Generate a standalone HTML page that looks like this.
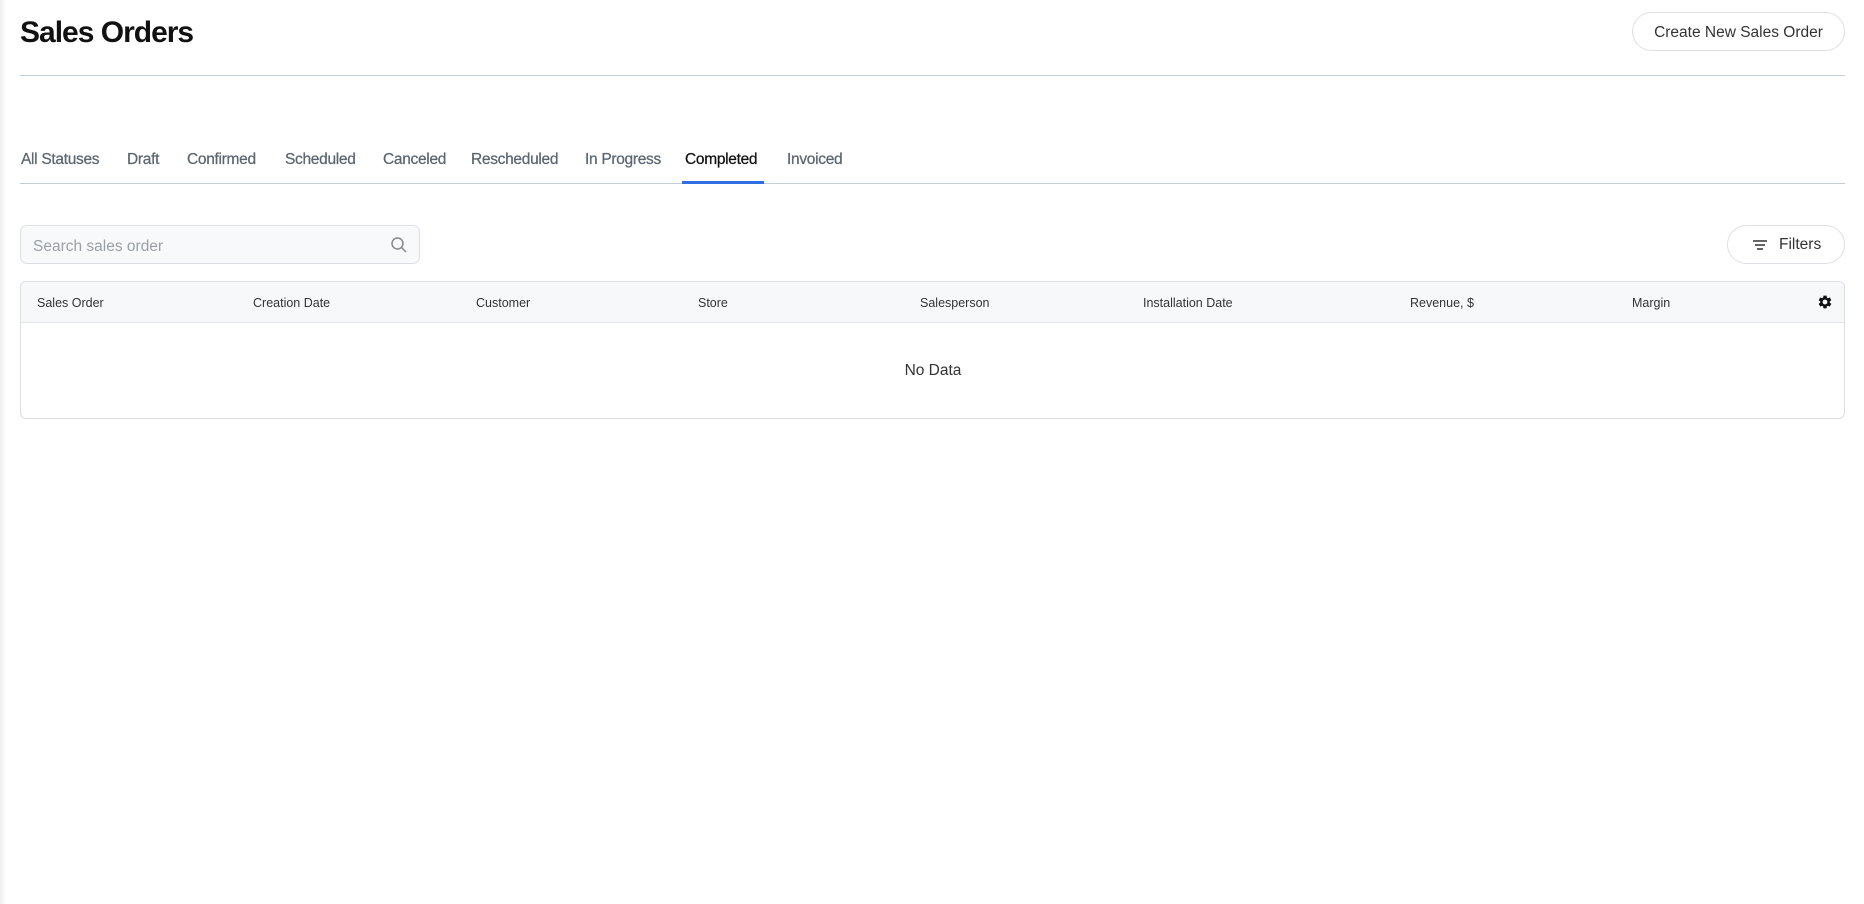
<!DOCTYPE html>
<html><head><meta charset="utf-8"><style>
*{box-sizing:border-box;margin:0;padding:0}
body{width:1864px;height:904px;background:#fff;font-family:"Liberation Sans",sans-serif;position:relative;overflow:hidden;color:#2f3640}
.a{position:absolute;white-space:nowrap}
.tab{position:absolute;top:151px;font-size:15.5px;color:#5c6670;letter-spacing:-0.3px;-webkit-text-stroke:0.25px #5c6670}
.th{position:absolute;top:296px;font-size:12.5px;color:#333}
</style></head><body>
<div class="a" style="left:0;top:0;width:6px;height:904px;background:linear-gradient(90deg,#eee,#fff)"></div>
<div class="a" style="left:20px;top:16px;font-size:30px;font-weight:bold;color:#111;letter-spacing:-1px">Sales Orders</div>
<div class="a" style="left:1632px;top:12px;width:213px;height:39px;border:1px solid #dcdfe3;border-radius:20px;font-size:15.5px;color:#333;text-align:center;line-height:39px">Create New Sales Order</div>
<div class="a" style="left:20px;top:75px;width:1825px;height:1px;background:#c6ccd3"></div>

<div class="tab" style="left:21px">All Statuses</div>
<div class="tab" style="left:127px">Draft</div>
<div class="tab" style="left:187px">Confirmed</div>
<div class="tab" style="left:285px">Scheduled</div>
<div class="tab" style="left:383px">Canceled</div>
<div class="tab" style="left:471px">Rescheduled</div>
<div class="tab" style="left:585px">In Progress</div>
<div class="tab" style="left:685px;color:#111;-webkit-text-stroke:0.25px #111">Completed</div>
<div class="tab" style="left:787px">Invoiced</div>
<div class="a" style="left:20px;top:183px;width:1825px;height:1px;background:#c6ccd3"></div>
<div class="a" style="left:682px;top:181px;width:82px;height:3px;background:#2f6fe4"></div>

<div class="a" style="left:20px;top:225px;width:400px;height:39px;border:1px solid #dcdfe3;border-radius:7px;background:#f8f9fa"></div>
<div class="a" style="left:33px;top:238px;font-size:15.5px;color:#9aa0a6">Search sales order</div>
<svg class="a" style="left:390px;top:236px" width="18" height="18" viewBox="0 0 18 18" fill="none" stroke="#888" stroke-width="1.5"><circle cx="7.5" cy="7.5" r="5.5"/><path d="M11.5 11.5L16 16"/></svg>

<div class="a" style="left:1727px;top:225px;width:118px;height:39px;border:1px solid #dcdfe3;border-radius:20px"></div>
<svg class="a" style="left:1752px;top:238px" width="16" height="14" viewBox="0 0 16 14" stroke="#333" stroke-width="1.4"><path d="M1 3h14M3 7h10M5 11h6"/></svg>
<div class="a" style="left:1779px;top:236px;font-size:15.5px;color:#333">Filters</div>

<div class="a" style="left:20px;top:281px;width:1825px;height:138px;border:1px solid #dcdfe3;border-radius:6px;overflow:hidden">
<div style="height:41px;background:#f7f8fa;border-bottom:1px solid #e2e5e9"></div>
</div>
<div class="th" style="left:37px">Sales Order</div>
<div class="th" style="left:253px">Creation Date</div>
<div class="th" style="left:476px">Customer</div>
<div class="th" style="left:698px">Store</div>
<div class="th" style="left:920px">Salesperson</div>
<div class="th" style="left:1143px">Installation Date</div>
<div class="th" style="left:1410px">Revenue, $</div>
<div class="th" style="left:1632px">Margin</div>
<svg class="a" style="left:1817px;top:294px" width="16" height="16" viewBox="0 0 24 24"><path fill="#111" d="M19.14 12.940c.04-.3.06-.61.06-.94s-.02-.64-.07-.94l2.03-1.580a.49.49 0 0 0 .12-.61l-1.92-3.32a.49.49 0 0 0-.59-.22l-2.39.96a7 7 0 0 0-1.62-.94l-.36-2.54a.48.48 0 0 0-.48-.41h-3.84a.48.48 0 0 0-.47.41l-.36 2.54c-.59.24-1.130.57-1.62.94l-2.39-.96a.48.48 0 0 0-.59.22L2.74 8.87a.47.47 0 0 0 .12.61l2.03 1.58c-.05.3-.09.63-.09.94s.02.64.07.94l-2.03 1.58a.49.49 0 0 0-.12.61l1.92 3.32c.12.22.37.29.59.22l2.39-.96c.5.38 1.03.7 1.62.94l.36 2.54c.05.24.24.41.48.41h3.84c.24 0 .44-.17.47-.41l.36-2.54c.59-.24 1.13-.56 1.62-.94l2.39.96c.22.08.47 0 .59-.22l1.92-3.32a.47.47 0 0 0-.12-.61l-2.01-1.58zM12 15.6A3.6 3.6 0 1 1 12 8.4a3.6 3.6 0 0 1 0 7.2z"/></svg>
<div class="a" style="left:0;width:1866px;top:362px;text-align:center;font-size:15.5px;color:#333">No Data</div>
</body></html>
